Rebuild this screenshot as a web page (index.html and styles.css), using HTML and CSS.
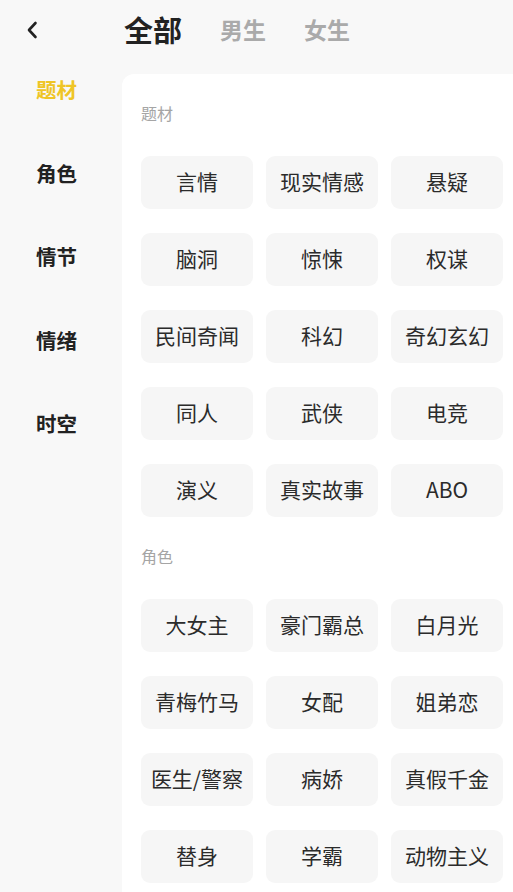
FILE: index.html
```html
<!DOCTYPE html>
<html lang="zh">
<head>
<meta charset="utf-8">
<link rel="stylesheet" href="styles.css">
</head>
<body>
<header class="top">
  <div class="back">
    <svg width="12" height="18" viewBox="0 0 12 18"><path d="M9.5 2 L3 9 L9.5 16" fill="none" stroke="#222" stroke-width="2.6" stroke-linecap="round" stroke-linejoin="round"/></svg>
  </div>
  <nav class="tabs">
    <span class="tab active">全部</span>
    <span class="tab">男生</span>
    <span class="tab">女生</span>
  </nav>
</header>
<main class="main">
  <aside class="side">
    <div class="side-item active">题材</div>
    <div class="side-item">角色</div>
    <div class="side-item">情节</div>
    <div class="side-item">情绪</div>
    <div class="side-item">时空</div>
  </aside>
  <section class="panel">
    <div class="group">
      <div class="label">题材</div>
      <div class="chips">
        <div class="chip">言情</div><div class="chip">现实情感</div><div class="chip">悬疑</div>
        <div class="chip">脑洞</div><div class="chip">惊悚</div><div class="chip">权谋</div>
        <div class="chip">民间奇闻</div><div class="chip">科幻</div><div class="chip">奇幻玄幻</div>
        <div class="chip">同人</div><div class="chip">武侠</div><div class="chip">电竞</div>
        <div class="chip">演义</div><div class="chip">真实故事</div><div class="chip">ABO</div>
      </div>
    </div>
    <div class="group">
      <div class="label">角色</div>
      <div class="chips">
        <div class="chip">大女主</div><div class="chip">豪门霸总</div><div class="chip">白月光</div>
        <div class="chip">青梅竹马</div><div class="chip">女配</div><div class="chip">姐弟恋</div>
        <div class="chip">医生/警察</div><div class="chip">病娇</div><div class="chip">真假千金</div>
        <div class="chip">替身</div><div class="chip">学霸</div><div class="chip">动物主义</div>
      </div>
    </div>
  </section>
</main>
</body>
</html>
```
FILE: styles.css
```css
html, body {
  margin: 0;
  padding: 0;
  height: 100%;
  overflow: hidden;
}
body {
  background: #f8f8f8;
  font-family: "Noto Sans CJK SC", "Noto Sans", sans-serif;
  color: #222;
}
.top {
  height: 60px;
  display: flex;
  align-items: center;
}
.back {
  width: 124px;
  padding-left: 26px;
  box-sizing: border-box;
  display: flex;
  align-items: center;
}
.tabs {
  display: flex;
  align-items: center;
  gap: 38px;
  margin-top: -2px;
}
.tab {
  font-size: 23px;
  font-weight: 700;
  color: #aaa;
  line-height: 30px;
}
.tab.active {
  font-size: 29px;
  color: #222;
  line-height: 36px;
}
.main {
  display: flex;
  margin-top: 14px;
  height: calc(100vh - 74px);
}
.side {
  width: 122px;
  flex: none;
  display: flex;
  flex-direction: column;
  gap: 55.5px;
  padding-top: 1px;
}
.side-item {
  height: 28px;
  line-height: 28px;
  font-size: 20.5px;
  font-weight: 700;
  padding-left: 36px;
  color: #222;
}
.side-item.active {
  color: #efc526;
}
.panel {
  flex: 1;
  background: #fff;
  border-top-left-radius: 12px;
  padding: 28px 10px 0 19px;
  overflow: hidden;
}
.group + .group {
  margin-top: 28px;
}
.label {
  font-size: 16px;
  line-height: 22px;
  color: #a5a5a5;
  margin-bottom: 32px;
}
.chips {
  display: grid;
  grid-template-columns: repeat(3, 112px);
  grid-auto-rows: 53px;
  gap: 24px 13px;
}
.chip {
  background: #f6f6f6;
  border-radius: 9px;
  display: flex;
  align-items: center;
  justify-content: center;
  font-size: 21px;
  line-height: 28px;
  padding-bottom: 4px;
  box-sizing: border-box;
  color: #2b2b2b;
  white-space: nowrap;
}
```
